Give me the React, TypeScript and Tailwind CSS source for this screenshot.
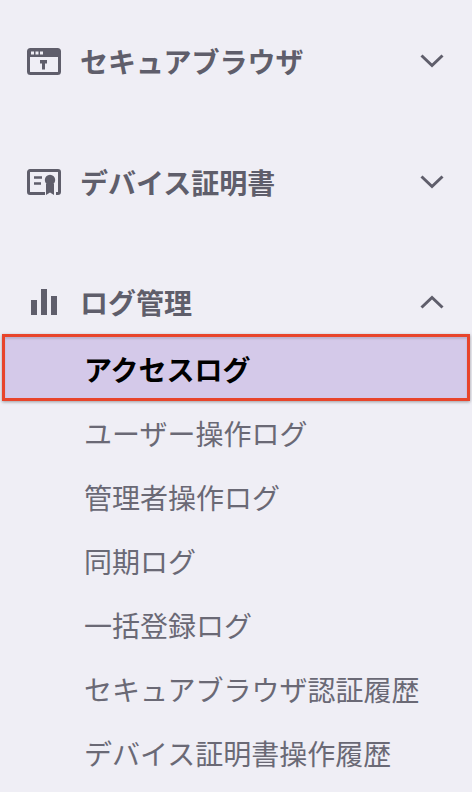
const font = "font-['Noto_Sans_CJK_JP','Noto_Sans',sans-serif]";

function Chevron({ up }: { up?: boolean }) {
  return (
    <svg width="24" height="14" viewBox="0 0 24 14" fill="none" stroke="#5f5e6b" strokeWidth="3">
      <path d={up ? "M1.5 12.5 L12 2.500 L22.5 12.5" : "M1.5 1.5 L12 11.500 L22.5 1.5"} />
    </svg>
  );
}

function BrowserIcon() {
  return (
    <svg width="34" height="27" viewBox="0 0 34 27" fill="none">
      <rect x="1.500" y="1.500" width="31" height="24" rx="2" stroke="#5f5e6b" strokeWidth="3" />
      <rect x="1" y="1" width="32" height="8" fill="#5f5e6b" />
      <rect x="4" y="3.500" width="3" height="3" fill="#efeef5" />
      <rect x="8.500" y="3.500" width="3" height="3" fill="#efeef5" />
      <rect x="13" y="3.500" width="3" height="3" fill="#efeef5" />
      <path d="M13 12h7v3.500h-2v6h-3v-6h-2z" fill="#5f5e6b" />
    </svg>
  );
}

function CertIcon() {
  return (
    <svg width="34" height="26" viewBox="0 0 34 26" fill="none">
      <path d="M18 24.500H3a1.500 1.500 0 0 1-1.500-1.500V3A1.500 1.500 0 0 1 3 1.500h28a1.500 1.500 0 0 1 1.500 1.500v20a1.500 1.500 0 0 1-1.500 1.500h-2" stroke="#5f5e6b" strokeWidth="3" />
      <path d="M7 8.500h8M7 14.500h7" stroke="#5f5e6b" strokeWidth="2.600" />
      <circle cx="23" cy="11" r="5.200" fill="#5f5e6b" />
      <path d="M19 15h8v11l-4-2.500-4 2.500z" fill="#5f5e6b" />
    </svg>
  );
}

function BarsIcon() {
  return (
    <svg width="26" height="26" viewBox="0 0 26 26" fill="#5f5e6b" className="ml-[4px]">
      <rect x="0" y="11" width="6" height="15" />
      <rect x="10" y="0" width="6" height="26" />
      <rect x="20" y="7" width="6" height="19" />
    </svg>
  );
}

function Header({ icon, label, up, cls }: { icon: React.ReactNode; label: string; up?: boolean; cls: string }) {
  return (
    <div className={`flex items-center h-[40px] pr-[28px] ${cls}`}>
      <div className="w-[80px] flex justify-start pl-[27px] shrink-0">{icon}</div>
      <span className="flex-1 text-[28px] leading-[40px] font-bold text-[#5f5e6b]">{label}</span>
      <Chevron up={up} />
    </div>
  );
}

const subs = ["ユーザー操作ログ", "管理者操作ログ", "同期ログ", "一括登録ログ", "セキュアブラウザ認証履歴", "デバイス証明書操作履歴"];

export default function App() {
  return (
    <div className={`w-[472px] h-[792px] overflow-hidden bg-[#efeef5] pt-[41px] ${font}`}>
      <Header icon={<BrowserIcon />} label="セキュアブラウザ" cls="mb-[81px]" />
      <Header icon={<CertIcon />} label="デバイス証明書" cls="mb-[80px]" />
      <Header icon={<BarsIcon />} label="ログ管理" up cls="mb-[12px]" />
      <div className="mx-[2px] w-[468px] h-[67px] border-[3px] border-[#e8442b] bg-[#d4c9e9] flex items-center pl-[79px] pt-[2px] shadow-[0_1px_3px_rgba(0,0,0,0.35),inset_0_2px_2px_rgba(0,0,0,0.12)]">
        <span className="text-[28px] font-bold text-black leading-[40px]">アクセスログ</span>
      </div>
      <div className="flex flex-col">
        {subs.map((s) => (
          <div key={s} className="h-[64px] flex items-center pl-[84px] text-[28px] leading-[40px] text-[#6a6975]">
            {s}
          </div>
        ))}
      </div>
    </div>
  );
}
